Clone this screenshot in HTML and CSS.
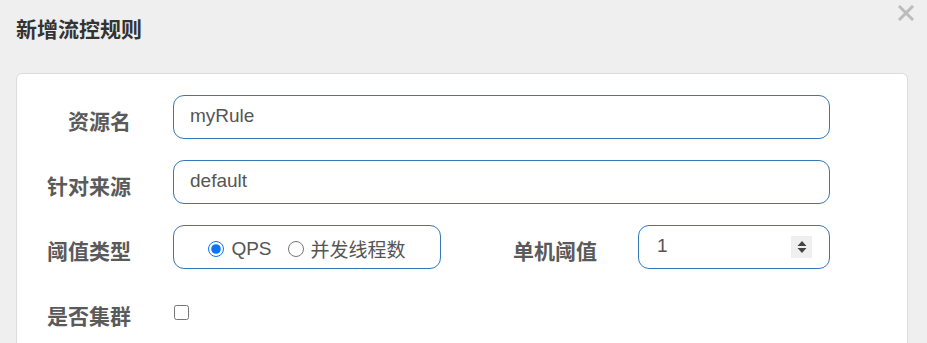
FILE: index.html
```html
<!DOCTYPE html>
<html lang="zh-CN">
<head>
<meta charset="utf-8">
<title>新增流控规则</title>
<link rel="stylesheet" href="styles.css">
</head>
<body>
<div class="modal">
  <div class="modal-header">
    <h4 class="modal-title">新增流控规则</h4>
    <span class="close" aria-label="close">
      <svg width="16" height="16" viewBox="0 0 16 16"><path d="M2 2 L14 14 M14 2 L2 14" stroke="#bcbcbc" stroke-width="3" stroke-linecap="square"/></svg>
    </span>
  </div>
  <div class="card">
    <div class="row">
      <label class="label">资源名</label>
      <input class="field wide" type="text" value="myRule">
    </div>
    <div class="row">
      <label class="label">针对来源</label>
      <input class="field wide" type="text" value="default">
    </div>
    <div class="row">
      <label class="label">阈值类型</label>
      <div class="field radios">
        <label class="opt"><input type="radio" name="grade" checked><span>QPS</span></label>
        <label class="opt"><input type="radio" name="grade"><span>并发线程数</span></label>
      </div>
      <label class="label label2">单机阈值</label>
      <div class="field number">
        <span class="num-val">1</span>
        <span class="spinner">
          <svg width="12" height="16" viewBox="0 0 12 16"><path d="M1.5 7 L6 2 L10.5 7 Z M1.5 9 L6 14 L10.5 9 Z" fill="#444"/></svg>
        </span>
      </div>
    </div>
    <div class="row">
      <label class="label">是否集群</label>
      <input class="check" type="checkbox">
    </div>
  </div>
</div>
</body>
</html>
```

FILE: styles.css
```css
html, body {
  margin: 0;
  padding: 0;
}
body {
  background: #efefef;
  font-family: "Liberation Sans", "Noto Sans CJK SC", sans-serif;
  color: #555;
  overflow: hidden;
}
.modal {
  position: relative;
  width: 927px;
  height: 343px;
  display: flex;
  flex-direction: column;
  overflow: hidden;
}
.modal-header {
  position: relative;
  flex: none;
  padding: 15px 16px 28px;
}
.modal-title {
  margin: 0;
  font-size: 21px;
  line-height: 30px;
  font-weight: bold;
  color: #333;
}
.close {
  position: absolute;
  top: 5px;
  right: 13px;
  width: 16px;
  height: 16px;
  display: block;
}
.close svg { display: block; }
.card {
  flex: 1;
  min-height: 0;
  margin: 0 19px 0 16px;
  background: #fff;
  border: 1px solid #dcdcdc;
  border-bottom: none;
  border-radius: 6px 6px 0 0;
  padding: 21px 0 0;
  box-sizing: border-box;
}
.row {
  display: flex;
  align-items: center;
  height: 44px;
  margin-bottom: 21px;
}
.row:last-child { margin-bottom: 0; }
.label {
  width: 114px;
  flex: none;
  text-align: right;
  font-size: 21px;
  font-weight: bold;
  color: #5a5a5a;
  padding-top: 5px;
  margin-right: 42px;
  font-family: "Noto Sans CJK SC", sans-serif;
  line-height: 30px;
}
.label2 {
  width: 156px;
  margin-right: 41px;
}
.field {
  box-sizing: border-box;
  height: 44px;
  border: 1px solid #337ab7;
  border-radius: 11px;
  background: #fff;
  font-family: "Liberation Sans", "Noto Sans CJK SC", sans-serif;
  font-size: 19px;
  color: #555;
  outline: none;
}
.wide {
  width: 657px;
  padding: 0 16px 2px;
}
.radios {
  width: 268px;
  display: flex;
  align-items: center;
  justify-content: center;
  gap: 16px;
  padding-top: 3px;
}
.opt {
  display: flex;
  align-items: center;
  gap: 7px;
  color: #555;
}
.opt input {
  margin: 0;
  width: 16px;
  height: 16px;
  accent-color: #0a75f2;
}
.number {
  width: 192px;
  display: flex;
  align-items: center;
  justify-content: space-between;
  padding: 0 17px 2px 18px;
}
.spinner {
  width: 21px;
  height: 22px;
  background: #efefef;
  display: flex;
  align-items: center;
  justify-content: center;
  margin-top: 2px;
}
.spinner svg { display: block; }
.check {
  margin: 0 0 0 1px;
  width: 15px;
  height: 15px;
}
```
